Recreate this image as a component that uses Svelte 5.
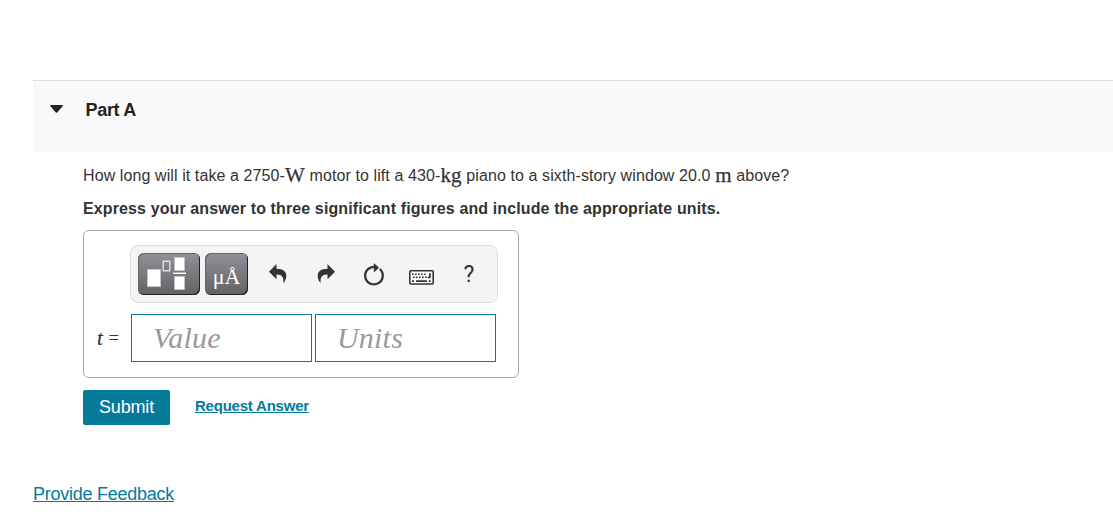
<script lang="ts">
    let open = true
    const fields = ['Value', 'Units']
    const keys = [4, 7, 10, 13, 16]
</script>

<main>
    <section>
        <header>
            <button class="toggle" aria-label="Toggle Part A" on:click={() => (open = !open)}>
                <svg width="13" height="8" viewBox="0 0 13 8"><path d="M0 .8Q0 0 1 0H12Q13 0 13 .8L7.2 7.5Q6.5 8.2 5.8 7.5Z" /></svg>
            </button>
            <h2>Part A</h2>
        </header>

        {#if open}
            <div class="content">
                <p class="question"><span>How long will it take a 2750-</span><span class="unit">W</span><span>&nbsp;motor to lift a 430-</span><span class="unit">kg</span><span>&nbsp;piano to a sixth-story window 20.0&nbsp;</span><span class="unit">m</span><span>&nbsp;above?</span></p>
                <p class="hint">Express your answer to three significant figures and include the appropriate units.</p>

                <div class="answer">
                    <div class="toolbar">
                        <button class="dark templates" aria-label="Templates">
                            <svg width="62" height="42" viewBox="0 0 62 42">
                                <g fill="#fff" stroke="#c5c5c8">
                                    <path d="M9.500 16.500h13v17h-13zM36.500 4.500h10v13h-10zM36.500 23.500h10v13h-10z" />
                                </g>
                                <path d="M25.200 8.200h6.600v9.600h-6.600z" fill="none" stroke="#e0e0e2" stroke-width="1.400" />
                                <path d="M35 20.300h13" stroke="#fff" stroke-width="1.500" />
                            </svg>
                        </button>
                        <button class="dark symbols">μÅ</button>
                        <button class="icon undo" aria-label="Undo">
                            <svg width="18" height="20" viewBox="0 0 18 20"><path d="M0 7.700L7.500 0V4.700C14 4.700 17.500 7.500 17.300 12C17.200 15 16 17.500 14.300 19C15.100 13.500 13 10.300 7.500 10.500V15.300Z" /></svg>
                        </button>
                        <button class="icon redo" aria-label="Redo">
                            <svg width="18" height="20" viewBox="0 0 18 20"><path d="M18 7.700L10.500 0V4.700C4 4.700 .5 7.500 .7 12C.8 15 2 17.500 3.700 19C2.900 13.500 5 10.300 10.500 10.500V15.300Z" /></svg>
                        </button>
                        <button class="icon reset" aria-label="Reset">
                            <svg width="22" height="24" viewBox="0 0 22 24">
                                <path d="M11.500 3.800A8.800 8.800 0 1 0 16.800 6" fill="none" stroke="#333" stroke-width="2.300" />
                                <path d="M10.800 0L16 4.800L10.800 9.400Z" />
                            </svg>
                        </button>
                        <button class="icon keyboard" aria-label="Keyboard shortcuts">
                            <svg width="25" height="15" viewBox="0 0 25 15">
                                <rect x=".8" y=".8" width="23.400" height="13.200" rx="1" fill="#fff" stroke="#333" stroke-width="1.600" />
                                {#each keys as x}
                                    <path d="M{x - 1} 3.500h1.700v1.500h-1.700zM{x} 6.500h1.700v1.500h-1.700z" />
                                {/each}
                                <path d="M20 3.200h1.700v5h-3v-1.500h1.300zM3 10.200h2v1.700h-2zM7 10.200h11v1.700h-11zM19.700 10.200h2v1.700h-2z" />
                            </svg>
                        </button>
                        <button class="icon help">?</button>
                    </div>

                    <div class="entry">
                        <span class="variable"><i>t</i> <span>=</span></span>
                        {#each fields as field}
                            <input placeholder={field} aria-label={field} />
                        {/each}
                    </div>
                </div>

                <div class="actions">
                    <button class="submit">Submit</button>
                    <a class="request" href="#answer">Request Answer</a>
                </div>
            </div>
        {/if}
    </section>

    <footer><a href="#feedback">Provide Feedback</a></footer>
</main>

<style>
    :global(body){margin:0;background:#fff;overflow:hidden;}
    main{box-sizing:border-box;height:523px;padding:80px 0 0 33px;font-family:"Liberation Sans",Arial,sans-serif;color:#333;}
    section{height:404px;}
    button{margin:0;padding:0;border:0;background:none;font-family:inherit;color:inherit;}
    svg{display:block;}
    header{box-sizing:border-box;display:flex;height:72px;border-top:1px solid #ddd;background:#f9f9f9;}
    .toggle{width:13px;height:8px;margin:24px 0 0 17px;fill:#222;}
    h2{margin:19px 0 0 22.500px;font-size:18px;line-height:20px;letter-spacing:-.3px;color:#222;}
    .content{padding-left:50px;}
    p{margin:0;white-space:nowrap;}
    .question{display:flex;height:24px;margin-top:12px;font-size:16px;line-height:24px;letter-spacing:.095px;}
    .unit{font-family:"Liberation Serif",serif;font-size:21px;line-height:22px;letter-spacing:.2px;-webkit-text-stroke:.25px #333;}
    .hint{margin-top:9px;font-size:16px;line-height:24px;font-weight:bold;letter-spacing:.115px;}
    .answer{box-sizing:border-box;width:436px;height:148px;margin-top:9px;padding:14px 0 0 13px;border:1px solid #aaa;border-radius:6px;}
    .toolbar{box-sizing:border-box;display:flex;width:368px;height:58px;margin-left:33px;padding:7px;border:1px solid #ddd;border-radius:8px;background:#f4f4f4;}
    .dark{box-sizing:border-box;height:42px;border-radius:6px;background:linear-gradient(#92909a,#626262);box-shadow:inset -1px -1px #222,inset 1px 1px #666;color:#fff;}
    .templates{width:62px;}
    .symbols{width:43px;margin-left:5px;padding-top:5px;font:22px/37px "Liberation Serif",serif;}
    .icon{height:24px;fill:#333;}
    .undo{width:18px;margin:9px 0 0 21px;}
    .redo{width:18px;margin:9px 0 0 30px;}
    .reset{width:22px;margin:10px 0 0 28px;}
    .keyboard{width:25px;height:15px;margin:16.500px 0 0 24px;}
    .help{width:14px;margin:9px 0 0 28px;font:23px/26px Roboto,sans-serif;}
    .entry{display:flex;align-items:center;gap:3px;height:48px;margin-top:11px;}
    .variable{display:flex;gap:6px;width:31px;font-family:"Liberation Serif",serif;font-size:21px;line-height:24px;-webkit-text-stroke:.2px #333;}
    .variable span{font-size:18px;line-height:25px;}
    input{box-sizing:border-box;width:181px;height:48px;margin:0;padding:0 0 0 21px;border:1px solid #057a9a;border-radius:0;background:#fff;font:italic 30px "Liberation Serif",serif;letter-spacing:.2px;}
    input::placeholder{color:#999;opacity:1;}
    .actions{display:flex;margin-top:12px;}
    .submit{width:87px;height:35px;border-radius:2px;background:#057a9b;color:#fff;font-size:18px;line-height:35px;letter-spacing:-.15px;}
    a{color:#057a9b;text-decoration:underline;}
    .request{margin:7px 0 0 25px;font-size:15px;line-height:18px;font-weight:bold;letter-spacing:-.22px;}
    footer{font-size:18px;line-height:20px;letter-spacing:-.25px;}
</style>
